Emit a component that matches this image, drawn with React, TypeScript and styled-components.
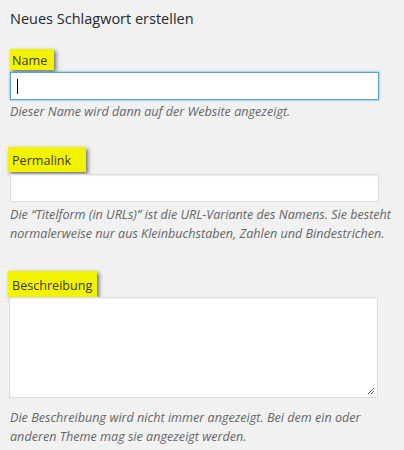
import styled, { createGlobalStyle } from "styled-components";

const GlobalStyle = createGlobalStyle`
    html, body {
        margin: 0;
        padding: 0;
        background: #f1f1f1;
    }
    body {
        font-family: "Open Sans", "Liberation Sans", sans-serif;
        color: #444;
    }
`;

const Wrapper = styled.div`
    width: 404px;
    height: 450px;
    box-sizing: border-box;
    padding: 9px 0 0 10px;
    display: flex;
    flex-direction: column;
`;

const Title = styled.h3`
    margin: 0;
    font-size: 14.5px;
    line-height: 20px;
    font-weight: 400;
    color: #23282d;
`;

const Field = styled.div<{ $top: number }>`
    margin-top: ${p => p.$top}px;
    display: flex;
    flex-direction: column;
    align-items: flex-start;
`;

const Highlight = styled.label<{ $w: number; $h: number; $x: number }>`
    box-sizing: border-box;
    width: ${p => p.$w}px;
    height: ${p => p.$h}px;
    margin-left: ${p => p.$x}px;
    padding-left: ${p => 2 - p.$x}px;
    display: flex;
    align-items: center;
    padding-top: 2px;
    background: #f3f300;
    box-shadow: 2px 2px 4px rgba(0, 0, 0, 0.55);
    font-size: 12.6px;
    color: #3a3a1a;
`;

const TextInput = styled.div<{ $focus?: boolean }>`
    box-sizing: border-box;
    width: 369px;
    height: 28px;
    margin-top: 2px;
    background: #fff;
    border: 1px solid ${p => (p.$focus ? "#5b9dd9" : "#ddd")};
    box-shadow: ${p => (p.$focus ? "0 0 2px rgba(30, 140, 190, 0.8)" : "inset 0 1px 2px rgba(0,0,0,0.07)")};
    display: flex;
    align-items: center;
    padding-left: 6px;
`;

const Caret = styled.span`
    width: 1px;
    height: 15px;
    background: #000;
`;

const TextArea = styled.div`
    box-sizing: border-box;
    position: relative;
    width: 369px;
    height: 101px;
    margin-left: -1px;
    background: #fff;
    border: 1px solid #ddd;
    box-shadow: inset 0 1px 2px rgba(0,0,0,0.07);
`;

const Grip = styled.svg`
    position: absolute;
    right: 2px;
    bottom: 2px;
`;

const Description = styled.p<{ $top: number }>`
    width: 390px;
    margin: ${p => p.$top}px 0 0;
    font-size: 12.6px;
    line-height: 19px;
    font-style: italic;
    color: #666;
`;

export default function App() {
    return <>
        <GlobalStyle />
        <Wrapper>
            <Title>Neues Schlagwort erstellen</Title>

            <Field $top={20}>
                <Highlight $w={44} $h={21} $x={0}>Name</Highlight>
                <TextInput $focus><Caret /></TextInput>
                <Description $top={2}>Dieser Name wird dann auf der Website angezeigt.</Description>
            </Field>

            <Field $top={26}>
                <Highlight $w={78} $h={25} $x={-2}>Permalink</Highlight>
                <TextInput />
                <Description $top={3}>
                    Die “Titelform (in URLs)” ist die URL-Variante des Namens. Sie besteht normalerweise nur aus Kleinbuchstaben, Zahlen und Bindestrichen.
                </Description>
            </Field>

            <Field $top={28}>
                <Highlight $w={89} $h={26} $x={-2}>Beschreibung</Highlight>
                <TextArea>
                    <Grip width="9" height="9" viewBox="0 0 9 9">
                        <path d="M8 2 L2 8 M8 5 L5 8" stroke="#555" strokeWidth="1" fill="none" />
                    </Grip>
                </TextArea>
                <Description $top={10}>
                    Die Beschreibung wird nicht immer angezeigt. Bei dem ein oder anderen Theme mag sie angezeigt werden.
                </Description>
            </Field>
        </Wrapper>
    </>;
}
